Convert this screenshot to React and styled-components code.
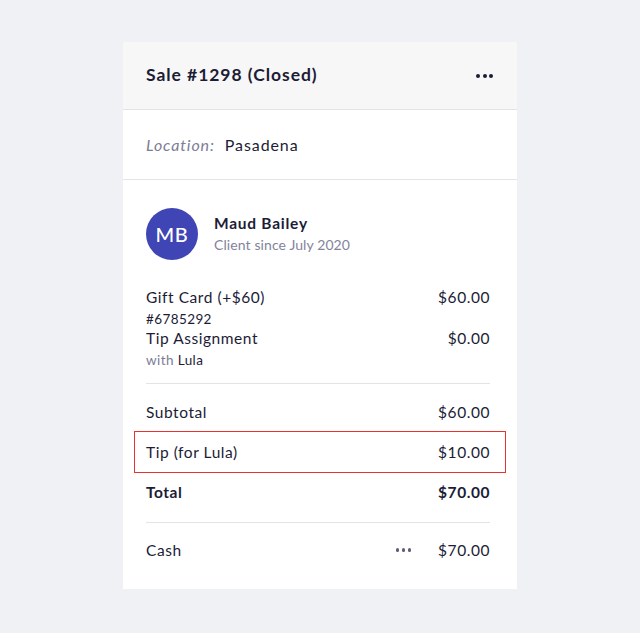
import React from "react";
import styled, { createGlobalStyle } from "styled-components";

const Global = createGlobalStyle`
  html, body { margin: 0; padding: 0; background: #f0f1f5; }
  body { font-family: Lato, "Noto Sans", sans-serif; color: #1c1c36; letter-spacing: 0.55px; }
  * { box-sizing: border-box; }
`;

const Page = styled.div`
  display: flex;
  justify-content: center;
  padding-top: 42px;
  min-height: 633px;
`;

const Card = styled.div`
  width: 394px;
  height: 547px;
  background: #ffffff;
  display: flex;
  flex-direction: column;
`;

const Header = styled.div`
  height: 68px;
  background: #f7f7f7;
  border-bottom: 1px solid #e4e4e6;
  display: flex;
  align-items: center;
  justify-content: space-between;
  padding: 0 24px 0 23px;
`;

const Title = styled.h1`
  margin: 0;
  margin-top: -2px;
  font-size: 17.5px;
  font-weight: 700;
  color: #1c1c36;
  letter-spacing: 0.95px;
`;

const Dots = styled.div`
  display: flex;
  gap: ${(p) => p.$gap}px;
  align-items: center;
  span {
    width: ${(p) => p.$size}px;
    height: ${(p) => p.$size}px;
    border-radius: 50%;
    background: ${(p) => p.$color};
  }
`;

const LocationBar = styled.div`
  height: 70px;
  border-bottom: 1px solid #e4e4e6;
  display: flex;
  align-items: center;
  padding: 0 23px;
  font-size: 16px;
  letter-spacing: 0.9px;
  gap: 10px;
`;

const Muted = styled.span`
  color: #7c7c96;
  font-style: ${(p) => (p.$italic ? "italic" : "normal")};
`;

const Body = styled.div`
  padding: 28px 27px 0 23px;
  display: flex;
  flex-direction: column;
`;

const Client = styled.div`
  display: flex;
  align-items: center;
  gap: 16px;
`;

const Avatar = styled.div`
  width: 52px;
  height: 52px;
  border-radius: 50%;
  background: #3f45b5;
  color: #ffffff;
  display: flex;
  align-items: center;
  justify-content: center;
  font-size: 20px;
  font-weight: 500;
  letter-spacing: 0.6px;
`;

const ClientInfo = styled.div`
  display: flex;
  flex-direction: column;
  gap: 4px;
  margin-top: -1px;
`;

const Name = styled.div`
  font-size: 15.5px;
  font-weight: 700;
  letter-spacing: 0.75px;
`;

const Since = styled.div`
  font-size: 14px;
  color: #83839c;
  letter-spacing: 0.1px;
`;

const Items = styled.div`
  margin-top: 27px;
  display: flex;
  flex-direction: column;
`;

const Line = styled.div`
  display: flex;
  justify-content: space-between;
  align-items: center;
  height: ${(p) => (p.$small ? 21 : 20)}px;
  padding-top: ${(p) => (p.$small ? 2 : 0)}px;
  font-size: ${(p) => (p.$small ? 13.5 : 15.5)}px;
  letter-spacing: ${(p) => (p.$small ? 0.4 : 0.55)}px;
`;

const Divider = styled.div`
  height: 1px;
  background: #e4e4e6;
  margin: ${(p) => p.$m};
`;

const Row = styled.div`
  position: relative;
  display: flex;
  justify-content: space-between;
  align-items: center;
  height: 40px;
  font-size: 15.5px;
  font-weight: ${(p) => (p.$bold ? 700 : 400)};
  ${(p) =>
    p.$highlight &&
    `
    &::after {
      content: "";
      position: absolute;
      left: -12px;
      right: -16px;
      top: -1px;
      bottom: -1px;
      border: 1.5px solid #e8322f;
    }
  `}
`;

const Right = styled.div`
  display: flex;
  align-items: center;
  gap: 27px;
`;

const DotsIcon = ({ size, gap, color }) => (
  <Dots $size={size} $gap={gap} $color={color}>
    <span />
    <span />
    <span />
  </Dots>
);

export default function App() {
  return (
    <>
      <Global />
      <Page>
        <Card>
          <Header>
            <Title>Sale #1298 (Closed)</Title>
            <DotsIcon size={4} gap={2.5} color="#1c1c36" />
          </Header>
          <LocationBar>
            <Muted $italic>Location:</Muted>
            <span>Pasadena</span>
          </LocationBar>
          <Body>
            <Client>
              <Avatar>MB</Avatar>
              <ClientInfo>
                <Name>Maud Bailey</Name>
                <Since>Client since July 2020</Since>
              </ClientInfo>
            </Client>
            <Items>
              <Line>
                <span>Gift Card (+$60)</span>
                <span>$60.00</span>
              </Line>
              <Line $small>
                <span>#6785292</span>
              </Line>
              <Line>
                <span>Tip Assignment</span>
                <span>$0.00</span>
              </Line>
              <Line $small>
                <span>
                  <Muted>with</Muted> Lula
                </span>
              </Line>
            </Items>
            <Divider $m="14px 0 8px" />
            <Row>
              <span>Subtotal</span>
              <span>$60.00</span>
            </Row>
            <Row $highlight>
              <span>Tip (for Lula)</span>
              <span>$10.00</span>
            </Row>
            <Row $bold>
              <span>Total</span>
              <span>$70.00</span>
            </Row>
            <Divider $m="10px 0 7px" />
            <Row>
              <span>Cash</span>
              <Right>
                <DotsIcon size={3.5} gap={2.5} color="#5c5c7a" />
                <span>$70.00</span>
              </Right>
            </Row>
          </Body>
        </Card>
      </Page>
    </>
  );
}
